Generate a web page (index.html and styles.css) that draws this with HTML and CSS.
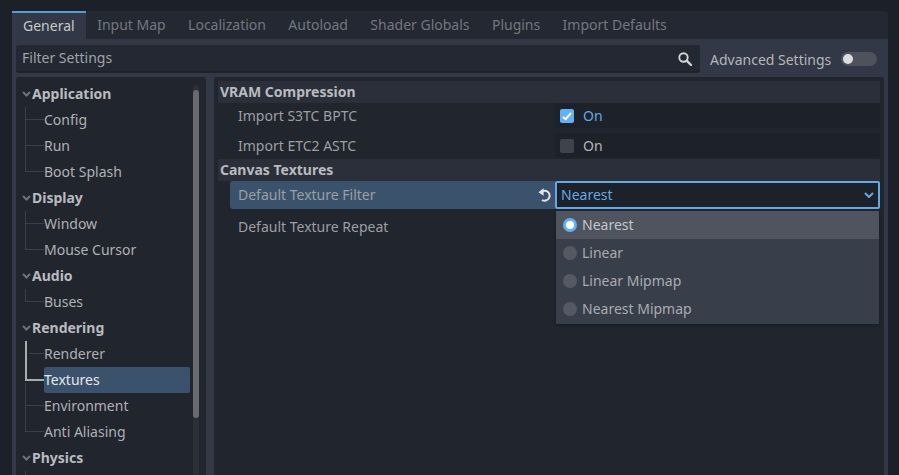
FILE: index.html
```html
<!DOCTYPE html>
<html lang="en">
<head>
    <meta charset="UTF-8">
    <meta name="viewport" content="width=device-width, initial-scale=1.0">
    <title>Project Settings</title>
    <link rel="stylesheet" href="styles.css">
</head>
<body>
    <div class="window">
        <div class="tabs">
            <div class="tab active">General</div>
            <div class="tab">Input Map</div>
            <div class="tab">Localization</div>
            <div class="tab">Autoload</div>
            <div class="tab">Shader Globals</div>
            <div class="tab">Plugins</div>
            <div class="tab">Import Defaults</div>
        </div>

        <div class="panel">
            <div class="toolbar">
                <div class="filter">
                    <span class="filter-text">Filter Settings</span>
                    <svg class="search-icon" width="16" height="16" viewBox="0 0 16 16">
                        <circle cx="6.5" cy="6.5" r="4.2" fill="none" stroke="#d4d5d7" stroke-width="1.9"/>
                        <path d="M9.7 9.7L14 14" fill="none" stroke="#d4d5d7" stroke-width="2.4" stroke-linecap="round"/>
                    </svg>
                </div>
                <div class="advanced">
                    <span>Advanced Settings</span>
                    <div class="switch"><div class="knob"></div></div>
                </div>
            </div>

            <div class="columns">
                <div class="tree">
                    <div class="tree-list">
                        <div class="group"><svg class="arrow" width="9" height="6" viewBox="0 0 9 6"><path d="M1 1l3.5 3.5L8 1" fill="none" stroke="#6f737a" stroke-width="2"/></svg>Application</div>
                        <div class="leaf">Config</div>
                        <div class="leaf">Run</div>
                        <div class="leaf last">Boot Splash</div>
                        <div class="group"><svg class="arrow" width="9" height="6" viewBox="0 0 9 6"><path d="M1 1l3.5 3.5L8 1" fill="none" stroke="#6f737a" stroke-width="2"/></svg>Display</div>
                        <div class="leaf">Window</div>
                        <div class="leaf last">Mouse Cursor</div>
                        <div class="group"><svg class="arrow" width="9" height="6" viewBox="0 0 9 6"><path d="M1 1l3.5 3.5L8 1" fill="none" stroke="#6f737a" stroke-width="2"/></svg>Audio</div>
                        <div class="leaf last">Buses</div>
                        <div class="group"><svg class="arrow" width="9" height="6" viewBox="0 0 9 6"><path d="M1 1l3.5 3.5L8 1" fill="none" stroke="#6f737a" stroke-width="2"/></svg>Rendering</div>
                        <div class="leaf before-selected">Renderer</div>
                        <div class="leaf selected"><span class="leaf-label">Textures</span></div>
                        <div class="leaf">Environment</div>
                        <div class="leaf last">Anti Aliasing</div>
                        <div class="group"><svg class="arrow" width="9" height="6" viewBox="0 0 9 6"><path d="M1 1l3.5 3.5L8 1" fill="none" stroke="#6f737a" stroke-width="2"/></svg>Physics</div>
                        <div class="leaf"></div>
                    </div>
                    <div class="scrollbar"><div class="grabber"></div></div>
                </div>

                <div class="inspector">
                    <div class="section">VRAM Compression</div>
                    <div class="row">
                        <div class="prop">Import S3TC BPTC</div>
                        <div class="value on">
                            <svg class="check" width="14" height="14" viewBox="0 0 14 14">
                                <rect width="14" height="14" rx="2" fill="#63b0f5"/>
                                <path d="M3 8l2.7 2.2L11 4" fill="none" stroke="#fff" stroke-width="2"/>
                            </svg>
                            On
                        </div>
                    </div>
                    <div class="row end">
                        <div class="prop">Import ETC2 ASTC</div>
                        <div class="value">
                            <span class="unchecked"></span>
                            On
                        </div>
                    </div>
                    <div class="section">Canvas Textures</div>
                    <div class="row hovered">
                        <div class="prop">
                            Default Texture Filter
                            <svg class="revert" width="14" height="14" viewBox="0 0 14 14">
                                <path d="M5 3a5 5 0 1 1-1 9" fill="none" stroke="#e2e4e6" stroke-width="2"/>
                                <path d="M5.6 0.2v7.6L0.4 4.2z" fill="#e2e4e6"/>
                            </svg>
                        </div>
                        <div class="select">
                            Nearest
                            <svg class="select-arrow" width="10" height="6" viewBox="0 0 10 6"><path d="M1 1l4 4 4-4" fill="none" stroke="#63a9e6" stroke-width="2"/></svg>
                        </div>
                    </div>
                    <div class="row plain">
                        <div class="prop">Default Texture Repeat</div>
                    </div>

                    <div class="popup">
                        <div class="option current"><span class="radio checked"></span>Nearest</div>
                        <div class="option"><span class="radio"></span>Linear</div>
                        <div class="option"><span class="radio"></span>Linear Mipmap</div>
                        <div class="option"><span class="radio"></span>Nearest Mipmap</div>
                    </div>
                </div>
            </div>
        </div>
    </div>
</body>
</html>
```

FILE: styles.css
```css
html, body {
    margin: 0;
    height: 100%;
    overflow: hidden;
}
body {
    font-family: "Noto Sans", sans-serif;
    font-size: 14px;
    background-color: #1c2028;
    color: #b4b6ba;
}
.window {
    display: flex;
    flex-direction: column;
    height: 475px;
    box-sizing: border-box;
    padding: 11px 11px 0 12px;
}
.tabs {
    display: flex;
    height: 28px;
    flex: none;
    background-color: #232833;
    border-radius: 3px 3px 0 0;
}
.tab {
    padding: 0 11.2px;
    line-height: 28px;
    color: #74777e;
}
.tab.active {
    box-sizing: border-box;
    width: 74px;
    padding: 0 11px;
    background-color: #323845;
    border-top: 2px solid #5a9bd5;
    line-height: 25px;
    color: #c6c8cb;
}
.panel {
    flex: 1;
    display: flex;
    flex-direction: column;
    min-height: 0;
    background-color: #323845;
    padding: 6px 4px 0;
}
.toolbar {
    display: flex;
    height: 28px;
    flex: none;
}
.filter {
    flex: 1;
    display: flex;
    align-items: center;
    justify-content: space-between;
    padding: 0 6px 1px;
    background-color: #232832;
    border-bottom: 2px solid #1e222a;
    box-sizing: border-box;
    border-radius: 3px;
}
.filter-text {
    color: #a0a3a8;
}
.search-icon {
    margin: 2px 1px 0 0;
}
.advanced {
    width: 184px;
    flex: none;
    display: flex;
    align-items: center;
    box-sizing: border-box;
    padding-left: 10px;
    gap: 10px;
}
.switch {
    width: 36px;
    height: 14px;
    border-radius: 7px;
    background-color: #4d525c;
    position: relative;
}
.knob {
    position: absolute;
    left: 2px;
    top: 2px;
    width: 10px;
    height: 10px;
    border-radius: 50%;
    background-color: #dcdde0;
}
.columns {
    flex: 1;
    display: flex;
    gap: 8px;
    margin-top: 4px;
    min-height: 0;
}
.tree {
    width: 190px;
    flex: none;
    display: flex;
    background-color: #21252e;
    border-radius: 3px 3px 0 0;
    overflow: hidden;
}
.tree-list {
    flex: 1;
    padding-top: 4px;
}
.group, .leaf {
    height: 26px;
    line-height: 26px;
    position: relative;
}
.group {
    padding-left: 16px;
    font-weight: bold;
    color: #b9bbbf;
}
.arrow {
    position: absolute;
    left: 6px;
    top: 10px;
}
.leaf {
    padding-left: 28px;
    color: #afb1b6;
}
/* tree guide lines */
.leaf::before {
    content: "";
    position: absolute;
    left: 9px;
    top: 0;
    width: 18px;
    height: 12px;
    border-left: 1px solid #3d4047;
    border-bottom: 1px solid #3d4047;
}
.leaf::after {
    content: "";
    position: absolute;
    left: 9px;
    top: 13px;
    height: 13px;
    border-left: 1px solid #3d4047;
}
.leaf.last::after {
    display: none;
}
.leaf.before-selected::before {
    left: 13px;
    width: 15px;
    border-left: none;
}
.leaf.before-selected::after {
    top: 0;
    height: 26px;
    border-left: 2px solid #a9abaf;
}
.leaf.selected {
    color: #e6e7e9;
}
.leaf-label {
    position: absolute;
    left: 28px;
    right: 0;
    top: 0;
    bottom: 0;
    background-color: #3a526b;
    border-radius: 2px;
}
.leaf.selected::before {
    z-index: 1;
    width: 17px;
    border-left: 2px solid #a9abaf;
    border-bottom: 2px solid #a9abaf;
}
.leaf.selected::after {
    top: 16px;
    height: 10px;
}
.scrollbar {
    width: 6px;
    flex: none;
    margin: 8px 7px 0 3px;
    background-color: #2b2f38;
    border-radius: 3px;
    padding-top: 5px;
}
.grabber {
    height: 328px;
    background-color: #686a6f;
    border-radius: 3px;
}
.inspector {
    flex: 1;
    position: relative;
    background-color: #21252e;
    padding: 4px 4px 0;
    border-radius: 3px 3px 0 0;
    overflow: hidden;
}
.section {
    height: 22px;
    line-height: 22px;
    padding-left: 2px;
    font-weight: bold;
    color: #b9bbbf;
    background-color: #2a2f39;
}
.row {
    display: flex;
    height: 26px;
    margin-bottom: 4px;
}
.row.end {
    margin-bottom: 0;
}
.prop {
    width: 337px;
    flex: none;
    box-sizing: border-box;
    padding-left: 20px;
    line-height: 26px;
    color: #9d9fa4;
}
.value {
    flex: 1;
    display: flex;
    align-items: center;
    gap: 9px;
    height: 25px;
    padding-left: 5px;
    background-color: #1d2129;
    border-radius: 3px;
    color: #b4b6ba;
}
.value.on {
    color: #63a9e6;
}
.check {
    flex: none;
}
.unchecked {
    width: 14px;
    height: 14px;
    border-radius: 2px;
    background-color: #3f434b;
}
.row.hovered {
    height: 28px;
    margin: 0 0 5px;
    padding-left: 12px;
}
.hovered .prop {
    width: 325px;
    display: flex;
    align-items: center;
    justify-content: space-between;
    padding: 0 3px 0 8px;
    background-color: #3a526b;
    border-radius: 3px 0 0 3px;
    line-height: 28px;
}
.select {
    flex: 1;
    display: flex;
    align-items: center;
    justify-content: space-between;
    box-sizing: border-box;
    padding: 0 4px 2px 4px;
    background-color: #1d2129;
    border: 2px solid #63a9e6;
    border-radius: 2px;
    color: #63a9e6;
}
.select-arrow {
    margin-top: 2px;
}
.row.plain {
    padding-left: 12px;
}
.plain .prop {
    padding-left: 8px;
}
.popup {
    position: absolute;
    left: 342px;
    top: 134px;
    width: 323px;
    height: 113px;
    background-color: #383e4a;
    box-shadow: 0 1px 3px rgba(0, 0, 0, 0.35);
}
.option {
    display: flex;
    align-items: flex-start;
    height: 28px;
    line-height: 27px;
    gap: 5px;
    padding-left: 7px;
    color: #a9acb1;
}
.option.current {
    background-color: #4f545f;
    color: #c4c6ca;
}
.radio {
    width: 14px;
    height: 14px;
    margin-top: 7px;
    border-radius: 50%;
    background-color: #545963;
}
.radio.checked {
    box-sizing: border-box;
    background-color: #fff;
    border: 3px solid #63b0f5;
}
```
